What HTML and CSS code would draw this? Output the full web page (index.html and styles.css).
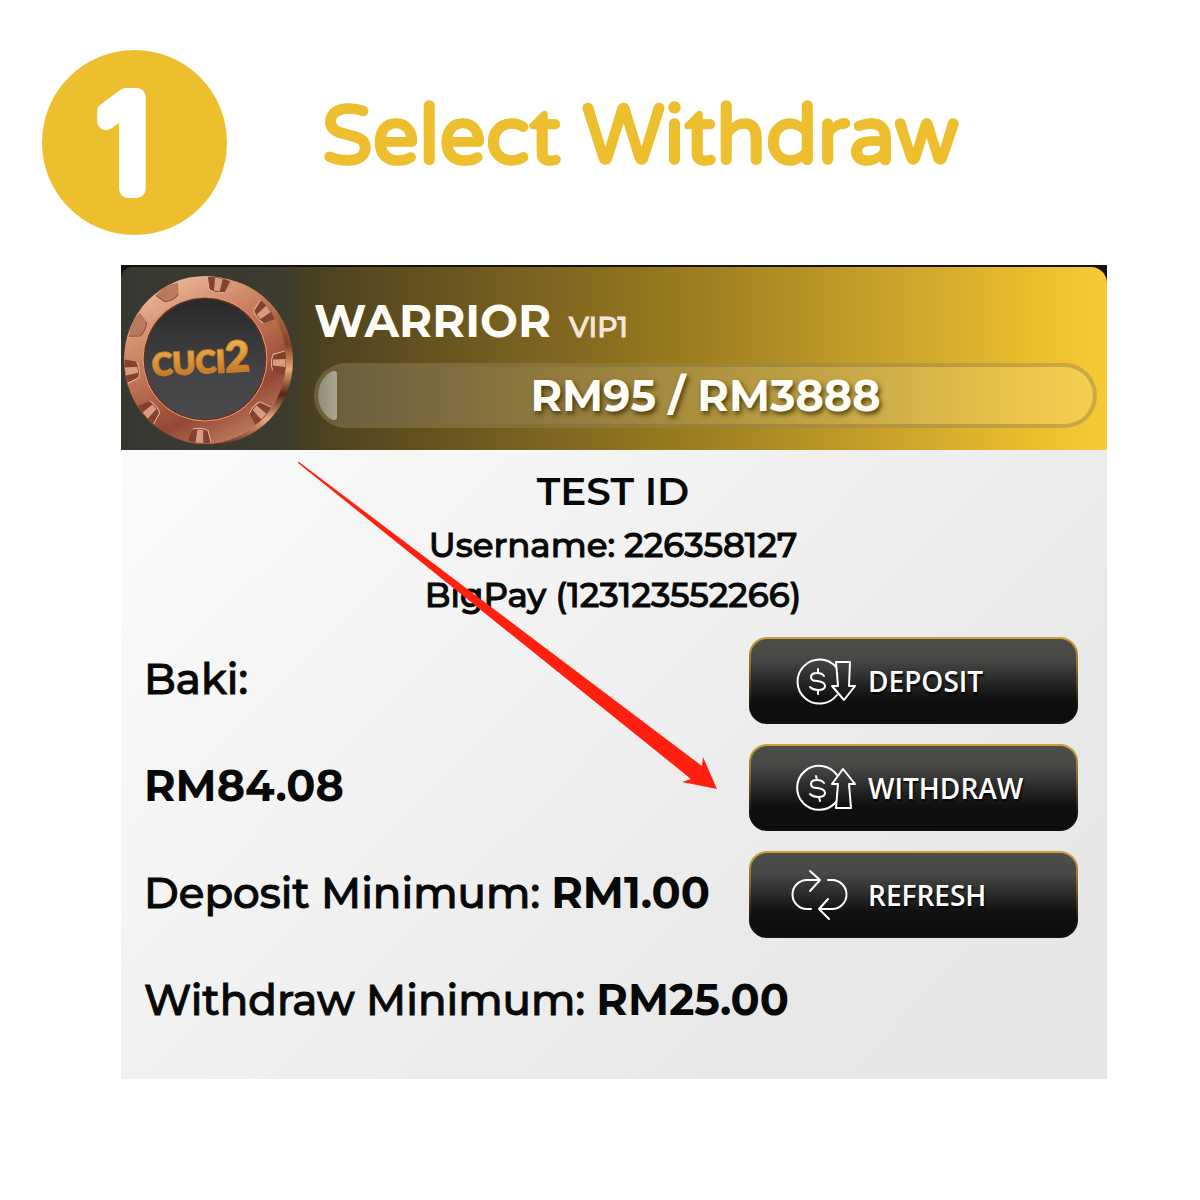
FILE: index.html
```
<!DOCTYPE html>
<html lang="en">
<head>
    <meta charset="UTF-8">
    <meta name="viewport" content="width=device-width, initial-scale=1.0">
    <title>Select Withdraw</title>
    <link rel="stylesheet" href="styles.css">
</head>
<body>

    <header class="step">
        <svg class="step-number" viewBox="0 0 185 185" role="img" aria-label="Step 1">
            <circle cx="92.5" cy="92.5" r="92.5" fill="#edbf2f"/>
            <text class="step-digit" x="82" y="139" text-anchor="middle">1</text>
        </svg>
        <h1>Select Withdraw</h1>
    </header>

    <main class="card">
        <div class="card-top">
            <div class="profile">
                <svg class="chip" viewBox="0 0 178 183" role="img" aria-label="Cuci2">
                    <defs>
                        <linearGradient id="copper" x1="0.1" y1="0" x2="0.6" y2="1">
                            <stop offset="0" stop-color="#f3c8a8"/>
                            <stop offset="0.3" stop-color="#d49070"/>
                            <stop offset="0.55" stop-color="#b96c4d"/>
                            <stop offset="0.8" stop-color="#944733"/>
                            <stop offset="1" stop-color="#b97557"/>
                        </linearGradient>
                        <linearGradient id="edge" x1="0" y1="0" x2="0" y2="1">
                            <stop offset="0" stop-color="#d99c72"/>
                            <stop offset="0.4" stop-color="#854027"/>
                            <stop offset="0.55" stop-color="#e9a877"/>
                            <stop offset="0.7" stop-color="#5a2415"/>
                            <stop offset="0.85" stop-color="#e8aa84"/>
                            <stop offset="1" stop-color="#70301f"/>
                        </linearGradient>
                        <linearGradient id="center" x1="0" y1="0" x2="0" y2="1">
                            <stop offset="0" stop-color="#29292b"/>
                            <stop offset="0.6" stop-color="#434345"/>
                            <stop offset="1" stop-color="#4a4a4c"/>
                        </linearGradient>
                        <linearGradient id="gold" x1="0" y1="0" x2="0" y2="1">
                            <stop offset="0" stop-color="#f5bd5c"/>
                            <stop offset="0.5" stop-color="#e09a3c"/>
                            <stop offset="1" stop-color="#b4681c"/>
                        </linearGradient>
                        <g id="notch">
                            <path d="M-12 -82 Q0 -85 12 -82 L8 -70 Q0 -67 -8 -70 Z" fill="#85402f"/>
                            <path d="M-4 -83 L4 -83 L3 -70 L-3 -70 Z" fill="#d99b7d"/>
                            <path d="M-12 -82 L-8 -70 Q0 -67 8 -70" fill="none" stroke="#eeb99a" stroke-width="1"/>
                        </g>
                        <g id="dent">
                            <path d="M-13 -81 Q0 -86 13 -81 L8 -71 Q0 -67 -8 -71 Z" fill="#b9795d"/>
                            <path d="M-13 -81 L-8 -71 Q0 -67 8 -71" fill="none" stroke="#8b4a36" stroke-width="1"/>
                        </g>
                    </defs>
                    <ellipse cx="92" cy="94" rx="80" ry="83" fill="url(#edge)"/>
                    <ellipse cx="84" cy="93" rx="81" ry="84" fill="url(#copper)"/>
                    <g transform="translate(84 93) scale(0.97 1)">
                        <use href="#notch" transform="rotate(10)"/>
                        <use href="#notch" transform="rotate(52)"/>
                        <use href="#notch" transform="rotate(92)"/>
                        <use href="#notch" transform="rotate(133)"/>
                        <use href="#notch" transform="rotate(184)"/>
                        <use href="#notch" transform="rotate(228)"/>
                        <use href="#notch" transform="rotate(262)"/>
                        <use href="#dent" transform="rotate(296)"/>
                        <use href="#dent" transform="rotate(331)"/>
                    </g>
                    <circle cx="84" cy="92" r="62" fill="#69301f" stroke="#e2a17f" stroke-width="1"/>
                    <circle cx="84" cy="92" r="60" fill="url(#center)"/>
                    <g transform="rotate(-3 84 96)">
                        <text class="chip-text" x="31" y="106">CUCI<tspan class="chip-two">2</tspan></text>
                    </g>
                </svg>
                <div class="profile-info">
                    <div class="rank">
                        <h2>WARRIOR</h2>
                        <span>VIP1</span>
                    </div>
                    <div class="progress">
                        <div class="progress-fill" style="width: 2.44%"></div>
                        <span class="progress-text">RM95 / RM3888</span>
                    </div>
                </div>
            </div>
        </div>

        <div class="card-body">
            <div class="account">
                <h3>TEST ID</h3>
                <p>Username: 226358127</p>
                <p>BigPay (123123552266)</p>
            </div>

            <div class="wallet">
                <p>Baki:</p>
                <button type="button">
                    <svg class="icon" viewBox="0 0 64 48">
                        <path d="M44 38 A22 22 0 1 1 43 10"/>
                        <path d="M31 19 Q29 16 24 16 Q18 16 18 20 Q18 24 24 24 Q32 25 32 29 Q32 33 25 33 Q20 33 17 30 M25 12 V16 M25 33 V37"/>
                        <path d="M43 5 H57 L56 29 H62 L51 43 L39 29 H45 Z"/>
                    </svg>
                    DEPOSIT
                </button>

                <p><b>RM84.08</b></p>
                <button type="button">
                    <svg class="icon" viewBox="0 0 64 48">
                        <path d="M43 38 A22 22 0 1 1 44 11"/>
                        <path d="M31 19 Q29 16 24 16 Q18 16 18 20 Q18 24 24 24 Q32 25 32 29 Q32 33 25 33 Q20 33 17 30 M23 12 L24 16 M26 33 L27 37"/>
                        <path d="M50 5 L62 20 H56 L58 44 H43 L45 20 H39 Z"/>
                    </svg>
                    WITHDRAW
                </button>

                <p>Deposit Minimum: <b>RM1.00</b></p>
                <button type="button">
                    <svg class="icon" viewBox="0 0 64 48">
                        <path d="M18 38 H14 A14 14 0 0 1 14 9 H27 M17 0 L27 9 L17 20"/>
                        <path d="M35 9 H39 A14 14 0 0 1 39 38 H26 M35 28 L26 38 L36 48"/>
                    </svg>
                    REFRESH
                </button>

                <p class="full">Withdraw Minimum: <b>RM25.00</b></p>
            </div>
        </div>

        <!-- pointer to the withdraw button -->
        <svg class="arrow" viewBox="0 0 420 328" aria-hidden="true">
            <path d="M0 0 L1 0 L404 304 L405 295 L419 327 L384 320 L393 317 L0 1 Z" fill="#ff2010"/>
        </svg>
    </main>

</body>
</html>
```
FILE: styles.css
```
body {
    font-family: Montserrat, Inter, sans-serif;
    margin: 0;
    padding: 50px 93px 50px 42px;
    background-color: white;
    color: #080808;
}
h1, h2, h3, p {
    margin: 0;
}
.step {
    display: flex;
    align-items: center;
    gap: 95px;
    margin-bottom: 30px;
}
.step-number {
    width: 185px;
    height: 185px;
    flex-shrink: 0;
}
.step-digit {
    font-family: "Arial Rounded MT Bold", Inter, sans-serif;
    font-size: 126px;
    font-weight: 300;
    fill: white;
    stroke: white;
    stroke-width: 18px;
    stroke-linejoin: round;
}
h1 {
    font-family: "Arial Rounded MT Bold", "Varela Round", "Liberation Sans", sans-serif;
    font-size: 82px;
    font-weight: bold;
    line-height: 100px;
    padding-bottom: 12px;
    color: #edbf2f;
    -webkit-text-stroke: 1px #edbf2f;
}
.card {
    position: relative;
    margin-left: 79px;
}
.card-top {
    background-color: #17130c;
    padding-top: 2px;
}
.profile {
    display: flex;
    align-items: center;
    gap: 15px;
    padding-right: 10px;
    border-radius: 12px 16px 0 0;
    background: linear-gradient(to right, #34332f 0%, #3e3926 15%, #51451f 22%, #7d6420 43%, #9c7d1e 58%, #c9a32b 78%, #eabd2d 92%, #f6ca35 100%);
}
.chip {
    width: 178px;
    height: 183px;
    flex-shrink: 0;
    border-radius: 12px;
    background-color: rgba(60, 60, 54, 0.5);
}
.profile-info {
    flex: 1;
    color: #fffdf6;
}
.rank {
    display: flex;
    align-items: baseline;
    gap: 18px;
    height: 58px;
    margin: 4px 0 12px;
}
.rank h2 {
    font-size: 45px;
    font-weight: 700;
    line-height: 56px;
}
.rank span {
    font-size: 28px;
    font-weight: 500;
    color: #f8e7d8;
    -webkit-text-stroke: 1px #f8e7d8;
}
.progress {
    position: relative;
    display: flex;
    align-items: center;
    justify-content: center;
    height: 57px;
    border: 4px solid rgba(150, 130, 90, 0.45);
    border-radius: 33px;
    background: rgba(255, 255, 255, 0.14);
    background-clip: padding-box;
    overflow: hidden;
}
.progress-fill {
    position: absolute;
    left: 0;
    top: 4px;
    bottom: 4px;
    border-radius: 24px 4px 4px 24px;
    background: linear-gradient(to right, #938c78, #aaa492);
}
.progress-text {
    font-size: 43px;
    font-weight: 700;
    text-shadow: 2px 3px 5px rgba(50, 40, 0, 0.8);
}
.chip-text {
    font-family: Lato, sans-serif;
    font-size: 31px;
    font-weight: 900;
    fill: url(#gold);
    stroke: #c27c2c;
    stroke-width: 2px;
    stroke-linejoin: round;
    paint-order: stroke;
}
.chip-two {
    font-size: 42px;
}
.card-body {
    padding: 12px 29px 34px 23px;
    background: linear-gradient(135deg, #fbfbfb 0%, #f1f1f1 40%, #e8e8e8 75%, #e5e5e5 100%);
}
.account {
    text-align: center;
    margin: 0 0 17px 4px;
}
.account h3 {
    font-size: 39px;
    font-weight: 600;
    line-height: 58px;
}
.account p {
    font-size: 34px;
    font-weight: 500;
    line-height: 50px;
    -webkit-text-stroke: 1px #080808;
}
.wallet {
    display: grid;
    grid-template-columns: 1fr 329px;
    grid-auto-rows: 87px;
    row-gap: 20px;
    align-items: center;
}
.wallet p {
    font-size: 42px;
    font-weight: 500;
    line-height: 48px;
    padding-bottom: 4px;
    white-space: nowrap;
    -webkit-text-stroke: 1px #080808;
}
.wallet b {
    font-size: 43px;
    font-weight: 700;
    -webkit-text-stroke: 0;
}
.wallet .full {
    grid-column: span 2;
}
button {
    display: flex;
    align-items: center;
    gap: 11px;
    height: 87px;
    padding: 0 0 0 42px;
    border: 2px solid transparent;
    border-radius: 18px;
    background: linear-gradient(#4d4d4a 0%, #474746 25%, #101010 72%, #0c0c0c 100%) padding-box,
        linear-gradient(#d0a03c 0%, #8d6b25 35%, #111111 80%) border-box;
    color: white;
    font-family: "Open Sans", sans-serif;
    font-size: 28px;
    font-weight: 600;
    text-shadow: 1px 2px 2px black;
    cursor: pointer;
}
.icon {
    width: 64px;
    height: 48px;
    fill: none;
    stroke: white;
    stroke-width: 2;
    stroke-linecap: round;
    stroke-linejoin: round;
    overflow: visible;
}
.arrow {
    position: absolute;
    left: 177px;
    top: 197px;
    width: 420px;
    height: 328px;
    pointer-events: none;
}
```
